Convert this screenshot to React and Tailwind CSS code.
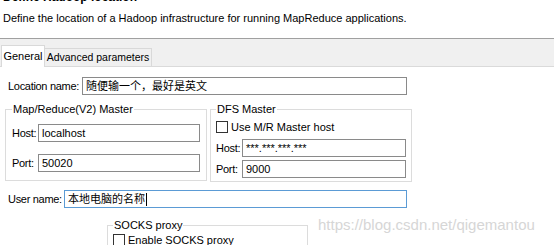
const font = { fontFamily: '"Liberation Sans", "Noto Sans CJK SC", sans-serif' };

const TextBox = ({ value, className = '', focused = false }) => (
  <div
    className={`h-[18px] flex items-center px-[3px] bg-white border ${
      focused ? 'border-[#5b9bd5]' : 'border-[#8a8a8a]'
    } ${className}`}
  >
    <span className="text-[11px] leading-none text-black whitespace-nowrap">{value}</span>
    {focused && <span className="w-px h-[13px] bg-black ml-[1px]" />}
  </div>
);

const CheckBox = ({ label }) => (
  <label className="flex items-center gap-[3px] text-[11px] leading-[14px] text-black whitespace-nowrap">
    <span className="w-[12px] h-[12px] border border-[#333] bg-white" />
    {label}
  </label>
);

const FormRow = ({ label, labelWidth, children, className = '' }) => (
  <div className={`flex items-center ${className}`}>
    <span className={`text-[11px] tracking-[-0.3px] text-black shrink-0 whitespace-nowrap ${labelWidth}`}>{label}</span>
    {children}
  </div>
);

export default function App() {
  return (
    <div className="w-[554px] h-[245px] overflow-hidden bg-white" style={font}>
      {/* wizard header */}
      <div className="h-[39px] pl-[3px] flex flex-col border-b border-[#a0a0a0]">
        <div className="text-[12px] font-bold leading-[14px] -mt-[10px] text-black">Define Hadoop location</div>
        <div className="mt-[7px] text-[11px] leading-[14px] text-black whitespace-nowrap">
          Define the location of a Hadoop infrastructure for running MapReduce applications.
        </div>
      </div>

      {/* tabs */}
      <div className="h-[28px] bg-[#f0f0f0] flex items-end pl-[1px] border-b border-[#dadada]">
        <div className="h-[22px] w-[44px] bg-white border border-b-0 border-[#d9d9d9] text-[11px] text-black flex items-center justify-center relative top-px whitespace-nowrap">
          General
        </div>
        <div className="h-[18px] w-[107px] bg-[#f0f0f0] border border-l-0 border-b-0 border-[#d9d9d9] text-[10.5px] text-black flex items-center justify-center whitespace-nowrap">
          Advanced parameters
        </div>
      </div>

      {/* general tab */}
      <div className="pt-[10px]">
        <FormRow label="Location name:" labelWidth="w-[74px]" className="pl-[8px]">
          <TextBox value="随便输一个，最好是英文" className="w-[325px]" />
        </FormRow>

        <div className="flex gap-[3px] pl-[5px] mt-[6px]">
          <fieldset className="w-[202px] h-[80px] border border-[#dcdcdc] px-[6px]">
            <legend className="text-[11px] leading-[16px] px-[1px] text-black whitespace-nowrap">Map/Reduce(V2) Master</legend>
            <FormRow label="Host:" labelWidth="w-[26px]" className="mt-[7px]">
              <TextBox value="localhost" className="w-[162px]" />
            </FormRow>
            <FormRow label="Port:" labelWidth="w-[26px]" className="mt-[12px]">
              <TextBox value="50020" className="w-[162px]" />
            </FormRow>
          </fieldset>

          <fieldset className="w-[202px] h-[81px] border border-[#dcdcdc] px-[5px]">
            <legend className="text-[11px] leading-[16px] px-[1px] text-black whitespace-nowrap">DFS Master</legend>
            <div className="mt-[3px]">
              <CheckBox label="Use M/R Master host" />
            </div>
            <FormRow label="Host:" labelWidth="w-[26px]" className="mt-[5px]">
              <TextBox value="***.***.***.***" className="w-[164px]" />
            </FormRow>
            <FormRow label="Port:" labelWidth="w-[26px]" className="mt-[3px]">
              <TextBox value="9000" className="w-[164px]" />
            </FormRow>
          </fieldset>
        </div>

        <FormRow label="User name:" labelWidth="w-[56px]" className="pl-[8px] mt-[8px]">
          <TextBox value="本地电脑的名称" className="w-[343px]" focused />
        </FormRow>

        <div className="flex items-start mt-[9px]">
          <fieldset className="ml-[107px] w-[201px] h-[40px] border border-[#dcdcdc] px-[5px]">
            <legend className="text-[11px] leading-[16px] px-[1px] text-black whitespace-nowrap">SOCKS proxy</legend>
            <CheckBox label="Enable SOCKS proxy" />
          </fieldset>
          <span
            className="ml-[10px] mt-[-1px] text-[15px] leading-[18px] text-[#d6d6d6] whitespace-nowrap"
            style={{ fontFamily: '"Liberation Sans", Arial, sans-serif' }}
          >
            https://blog.csdn.net/qigemantou
          </span>
        </div>
      </div>
    </div>
  );
}
